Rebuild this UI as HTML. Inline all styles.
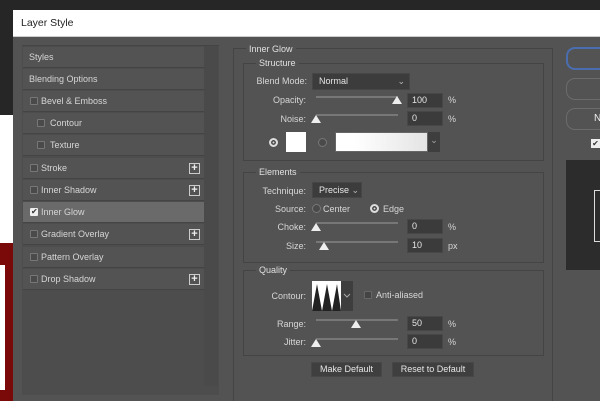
<!DOCTYPE html>
<html style="width:600px;height:401px;overflow:hidden"><head><style>
*{margin:0;padding:0;box-sizing:border-box}
body{width:600px;height:401px;overflow:hidden;background:#fff;font-family:"Liberation Sans",sans-serif;font-size:9px;color:#d6d6d6;position:relative}
.a{position:absolute}
.row{position:absolute;left:23px;width:181px;height:21px;background:#535353;border-bottom:1px solid #444;line-height:21px}
.cb{position:absolute;top:6px;width:8px;height:8px;border:1px solid #777;border-radius:1px;background:#4a4a4a}
.plus{position:absolute;right:4px;top:5px;width:11px;height:11px;border:1px solid #ccc;color:#eee;font-size:11px;line-height:8px;text-align:center;font-weight:bold}
.lbl{position:absolute;text-align:right;width:80px}
.inp{position:absolute;width:36px;height:15px;background:#3b3b3b;border:1px solid #474747;line-height:13px;padding-left:4px;color:#e6e6e6}
.trk{position:absolute;height:2px;width:82px;background:#777}
.th{position:absolute;width:0;height:0;border-left:5px solid transparent;border-right:5px solid transparent;border-bottom:8px solid #eee}
.box{position:absolute;border:1px solid #444}
.glbl{position:absolute;background:#535353;padding:0 3px;color:#e0e0e0}
.dd{position:absolute;background:#3c3c3c;border:1px solid #464646;color:#e6e6e6;line-height:15px;padding-left:6px}
.rad{position:absolute;width:9px;height:9px;border-radius:50%;border:1px solid #777;background:#4a4a4a}
.radon{background:#ddd;border:2px solid #ddd;box-shadow:inset 0 0 0 1.5px #444}
.btn{position:absolute;height:15px;background:#3f3f3f;border:1px solid #474747;text-align:center;line-height:13px;color:#e6e6e6}
</style></head><body>
<div class="a" style="left:0;top:0;width:600px;height:115px;background:#262626"></div>
<div class="a" style="left:0;top:243px;width:13px;height:158px;background:#7a0a0a"></div>
<div class="a" style="left:0;top:265px;width:5px;height:125px;background:#fff"></div>
<div class="a" style="left:13px;top:10px;width:587px;height:391px;background:#535353"></div>
<div class="a" style="left:13px;top:10px;width:587px;height:27px;background:#fff;border-bottom:1px solid #ccc;color:#222;font-size:10.5px;line-height:27px;padding-left:8px">Layer Style</div>
<div class="a" style="left:22px;top:45px;width:197px;height:350px;background:#4d4d4d;border-top:1px solid #444"></div>
<div class="a" style="left:204px;top:46px;width:14px;height:340px;background:#4a4a4a"></div>
<div class="row" style="top:47px;padding-left:6px">Styles</div>
<div class="row" style="top:69px;padding-left:6px">Blending Options</div>
<div class="row" style="top:91px"><span class="cb" style="left:7px"></span><span style="position:absolute;left:18px">Bevel &amp; Emboss</span></div>
<div class="row" style="top:113px"><span class="cb" style="left:14px"></span><span style="position:absolute;left:27px">Contour</span></div>
<div class="row" style="top:135px"><span class="cb" style="left:14px"></span><span style="position:absolute;left:27px">Texture</span></div>
<div class="row" style="top:158px"><span class="cb" style="left:7px"></span><span style="position:absolute;left:18px">Stroke</span><span class="plus">+</span></div>
<div class="row" style="top:180px"><span class="cb" style="left:7px"></span><span style="position:absolute;left:18px">Inner Shadow</span><span class="plus">+</span></div>
<div class="row" style="top:202px;background:#6a6a6a"><span class="cb" style="left:7px;background:#eee;border-color:#eee;color:#333;font-size:8px;line-height:6px;text-align:center">✔</span><span style="position:absolute;left:18px">Inner Glow</span></div>
<div class="row" style="top:224px"><span class="cb" style="left:7px"></span><span style="position:absolute;left:18px">Gradient Overlay</span><span class="plus">+</span></div>
<div class="row" style="top:247px"><span class="cb" style="left:7px"></span><span style="position:absolute;left:18px">Pattern Overlay</span></div>
<div class="row" style="top:269px"><span class="cb" style="left:7px"></span><span style="position:absolute;left:18px">Drop Shadow</span><span class="plus">+</span></div>
<div class="a" style="left:233px;top:48px;width:320px;height:353px;border:1px solid #444;border-bottom:none"></div>
<div class="glbl" style="left:246px;top:44px">Inner Glow</div>
<div class="box" style="left:243px;top:63px;width:301px;height:98px"></div>
<div class="glbl" style="left:256px;top:58px">Structure</div>
<div class="lbl" style="left:227px;top:76px">Blend Mode:</div>
<div class="dd" style="left:312px;top:73px;width:98px;height:17px">Normal<span style="position:absolute;right:4px;color:#bbb">⌄</span></div>
<div class="lbl" style="left:226px;top:95px">Opacity:</div>
<div class="trk" style="left:316px;top:96px"></div><div class="th" style="left:392px;top:96px"></div>
<div class="inp" style="left:407px;top:93px">100</div><div class="a" style="left:448px;top:95px">%</div>
<div class="lbl" style="left:226px;top:114px">Noise:</div>
<div class="trk" style="left:316px;top:114px"></div><div class="th" style="left:311px;top:115px"></div>
<div class="inp" style="left:407px;top:111px">0</div><div class="a" style="left:448px;top:114px">%</div>
<div class="rad radon" style="left:269px;top:138px"></div>
<div class="a" style="left:286px;top:132px;width:20px;height:20px;background:#fff"></div>
<div class="rad" style="left:318px;top:138px"></div>
<div class="a" style="left:335px;top:132px;width:93px;height:20px;background:linear-gradient(90deg,#fff 20%,#e4e4e4);border:1px solid #666"></div>
<div class="a" style="left:428px;top:132px;width:12px;height:20px;background:#3e3e3e;color:#aaa;text-align:center;line-height:16px">⌄</div>
<div class="box" style="left:243px;top:172px;width:301px;height:91px"></div>
<div class="glbl" style="left:256px;top:167px">Elements</div>
<div class="lbl" style="left:226px;top:186px">Technique:</div>
<div class="dd" style="left:312px;top:182px;width:50px;height:16px">Precise <span style="color:#bbb">⌄</span></div>
<div class="lbl" style="left:226px;top:204px">Source:</div>
<div class="rad" style="left:312px;top:204px"></div><div class="a" style="left:323px;top:204px">Center</div>
<div class="rad radon" style="left:370px;top:204px"></div><div class="a" style="left:383px;top:204px">Edge</div>
<div class="lbl" style="left:226px;top:222px">Choke:</div>
<div class="trk" style="left:316px;top:222px"></div><div class="th" style="left:311px;top:223px"></div>
<div class="inp" style="left:407px;top:219px">0</div><div class="a" style="left:448px;top:222px">%</div>
<div class="lbl" style="left:226px;top:241px">Size:</div>
<div class="trk" style="left:316px;top:241px"></div><div class="th" style="left:319px;top:242px"></div>
<div class="inp" style="left:407px;top:238px">10</div><div class="a" style="left:448px;top:241px">px</div>
<div class="box" style="left:243px;top:270px;width:301px;height:86px"></div>
<div class="glbl" style="left:256px;top:265px">Quality</div>
<div class="lbl" style="left:226px;top:291px">Contour:</div>
<svg class="a" style="left:312px;top:281px" width="41" height="30"><rect width="41" height="30" fill="#3e3e3e"/><rect width="29" height="30" fill="#fff"/><path d="M0 30 L5 3 L10 30 Z M10 30 L15 3 L20 30 Z M20 30 L25 3 L29 30 Z" fill="#222"/><path d="M32 13 l3 3 l3 -3" stroke="#aaa" fill="none"/></svg>
<div class="cb" style="left:364px;top:291px;border-color:#666;background:#444"></div><div class="a" style="left:376px;top:290px">Anti-aliased</div>
<div class="lbl" style="left:226px;top:319px">Range:</div>
<div class="trk" style="left:316px;top:319px"></div><div class="th" style="left:351px;top:320px"></div>
<div class="inp" style="left:407px;top:316px">50</div><div class="a" style="left:448px;top:319px">%</div>
<div class="lbl" style="left:226px;top:337px">Jitter:</div>
<div class="trk" style="left:316px;top:338px"></div><div class="th" style="left:311px;top:339px"></div>
<div class="inp" style="left:407px;top:334px">0</div><div class="a" style="left:448px;top:337px">%</div>
<div class="btn" style="left:311px;top:362px;width:71px">Make Default</div>
<div class="btn" style="left:392px;top:362px;width:82px">Reset to Default</div>
<div class="a" style="left:566px;top:47px;width:50px;height:23px;border:2px solid #4a6db0;border-radius:9px"></div>
<div class="a" style="left:566px;top:78px;width:50px;height:22px;border:1px solid #6c6c6c;border-radius:9px"></div>
<div class="a" style="left:566px;top:108px;width:50px;height:22px;border:1px solid #6c6c6c;border-radius:9px;padding-left:27px;line-height:20px;color:#eee;font-size:10px">N</div>
<div class="a" style="left:591px;top:139px;width:9px;height:9px;background:#eee;color:#333;font-size:8px;line-height:9px;text-align:center">✔</div>
<div class="a" style="left:566px;top:160px;width:34px;height:110px;background:#2c2c2c"></div>
<div class="a" style="left:594px;top:190px;width:6px;height:52px;border:1px solid #ddd;border-right:none"></div>
</body></html>
